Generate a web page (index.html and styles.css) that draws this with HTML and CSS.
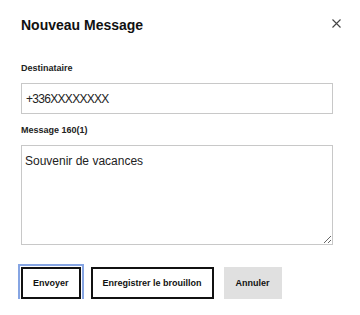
FILE: index.html
```html
<!DOCTYPE html>
<html lang="fr">
<head>
    <meta charset="UTF-8">
    <meta name="viewport" content="width=device-width, initial-scale=1.0">
    <title>Nouveau Message</title>
    <link rel="stylesheet" href="styles.css">
</head>
<body>
    <div class="dialog">
        <header class="dialog-header">
            <h1>Nouveau Message</h1>
            <button class="close" type="button" aria-label="Fermer">
                <svg width="9" height="9" viewBox="0 0 9 9">
                    <path d="M0.5 0.5 L8.5 8.5 M8.5 0.5 L0.5 8.5" stroke="#444" stroke-width="1.1" fill="none"/>
                </svg>
            </button>
        </header>
        <form class="message-form">
            <label for="to">Destinataire</label>
            <input id="to" class="phone" type="text" value="+336XXXXXXXX">
            <label for="body">Message 160(1)</label>
            <textarea id="body">Souvenir de vacances</textarea>
            <div class="actions">
                <button type="submit" class="btn btn-outline is-focused">Envoyer</button>
                <button type="button" class="btn btn-outline">Enregistrer le brouillon</button>
                <button type="button" class="btn btn-grey">Annuler</button>
            </div>
        </form>
    </div>
</body>
</html>
```

FILE: styles.css
```css
/* Global */
body {
    margin: 0;
    font-family: 'Liberation Sans', Arial, sans-serif;
    background: #fff;
    color: #111;
}

.dialog {
    padding: 17px 19px 0 21px;
}

/* Header */
.dialog-header {
    display: flex;
    justify-content: space-between;
    align-items: flex-start;
}

.dialog-header h1 {
    margin: 0;
    font-size: 14px;
    line-height: 16px;
    font-weight: bold;
    color: #111;
}

.close {
    border: none;
    background: none;
    padding: 0;
    margin-top: 2px;
    width: 9px;
    height: 9px;
    display: flex;
    cursor: pointer;
}

/* Form */
.message-form {
    display: flex;
    flex-direction: column;
    margin-top: 30px;
    margin-right: 8px;
}

label {
    font-size: 9px;
    line-height: 10px;
    font-weight: bold;
    color: #222;
    margin-bottom: 10px;
}

input,
textarea {
    font-family: 'Liberation Sans', Arial, sans-serif;
    font-size: 12px;
    color: #222;
    border: 1px solid #c8c8c8;
    border-radius: 0;
    box-sizing: border-box;
    width: 100%;
    margin: 0;
    outline: none;
}

input {
    height: 31px;
    padding: 0 4px;
    margin-bottom: 11px;
}

.phone {
    letter-spacing: -0.7px;
}

textarea {
    height: 100px;
    padding: 8px 3px;
    resize: vertical;
}

/* Buttons */
.actions {
    display: flex;
    gap: 10px;
    margin-top: 22px;
}

.btn {
    font-family: 'Liberation Sans', Arial, sans-serif;
    font-size: 9px;
    font-weight: bold;
    color: #111;
    height: 32px;
    padding: 0 10px;
    border: 2px solid transparent;
    border-radius: 0;
    cursor: pointer;
}

.btn-outline {
    background: #fff;
    border-color: #111;
}

.btn-grey {
    background: #e0e0e0;
}

.is-focused {
    outline: 2px solid #86a5e3;
    outline-offset: 1px;
}
```
